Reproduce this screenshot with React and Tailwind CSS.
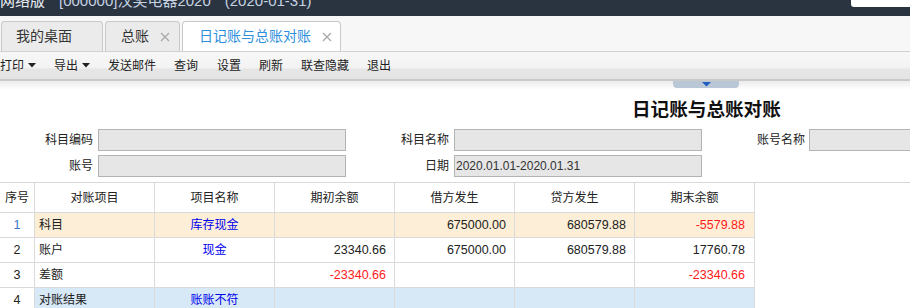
import React from "react";

const Caret = () => (
  <svg width="8" height="5" viewBox="0 0 8 5" className="ml-[4px]">
    <path d="M0 0 L8 0 L4 4.5 Z" fill="#222" />
  </svg>
);

const X = () => (
  <svg width="10" height="10" viewBox="0 0 10 10">
    <path d="M1 1 L9 9 M9 1 L1 9" stroke="#a8a8a8" strokeWidth="1.3" />
  </svg>
);

const rows = [
  { n: "1", nc: "text-[#3b78c4]", item: "科目", name: "库存现金", a: "", b: "675000.00", c: "680579.88", d: "-5579.88", dRed: true, bg: "bg-[#fdefd7]" },
  { n: "2", nc: "text-[#222]", item: "账户", name: "现金", a: "23340.66", b: "675000.00", c: "680579.88", d: "17760.78", dRed: false, bg: "bg-white" },
  { n: "3", nc: "text-[#222]", item: "差额", name: "", a: "-23340.66", aRed: true, b: "", c: "", d: "-23340.66", dRed: true, bg: "bg-white" },
  { n: "4", nc: "text-[#222]", item: "对账结果", name: "账账不符", a: "", b: "", c: "", d: "", bg: "bg-[#d7e8f6]" },
];

export default function App() {
  return (
    <div className="w-[910px] h-[308px] overflow-hidden bg-white font-['Liberation_Sans','Noto_Sans_CJK_SC',sans-serif] text-[12px] text-[#222]">
      {/* top bar */}
      <div className="relative h-[16px] bg-[#2a3441] overflow-hidden">
        <div className="flex mt-[-7px] text-[15px] leading-[15px] text-[#c5d2e0] whitespace-nowrap">
          <span className="text-[#e8edf2]">网络版</span>
          <span className="ml-[14px]">[000000]汉奖电器2020</span>
          <span className="ml-[14px]">(2020-01-31)</span>
        </div>
        <div className="absolute right-0 top-0 w-[59px] h-[7px] bg-white rounded-bl-[3px]" />
      </div>

      {/* tabs */}
      <div className="h-[36px] bg-[#f7f7f7] border-b border-[#d2d2d2] flex items-end pl-[1px] gap-[2px]">
        <div className="w-[102px] h-[30px] bg-[#ebebeb] border border-b-0 border-[#c9c9c9] rounded-t-[4px] flex items-center pl-[14px] text-[14px] text-[#333]">
          我的桌面
        </div>
        <div className="w-[75px] h-[30px] bg-[#ebebeb] border border-b-0 border-[#c9c9c9] rounded-t-[4px] flex items-center pl-[15px] text-[14px] text-[#333]">
          总账
          <span className="ml-[11px] flex"><X /></span>
        </div>
        <div className="w-[159px] h-[30px] bg-white border border-b-0 border-[#c9c9c9] rounded-t-[4px] flex items-center pl-[16px] text-[14px] text-[#2f8fdc]">
          日记账与总账对账
          <span className="ml-[11px] flex"><X /></span>
        </div>
      </div>

      {/* toolbar */}
      <div className="h-[29px] bg-[linear-gradient(#f7f7f7_0%,#f3f3f3_60%,#e6e6e6_62%,#e4e4e4_100%)] border-b-2 border-[#c9c9c9] flex items-center gap-[18px] text-[12px] text-[#222]">
        <div className="flex items-center">打印<Caret /></div>
        <div className="flex items-center">导出<Caret /></div>
        <div>发送邮件</div>
        <div>查询</div>
        <div className="ml-[1px]">设置</div>
        <div>刷新</div>
        <div>联查隐藏</div>
        <div>退出</div>
      </div>

      {/* collapse strip */}
      <div className="h-[8px] bg-[linear-gradient(#ececec,#fdfdfd)] flex">
        <div className="ml-[673px] w-[66px] h-[7px] bg-[#b9c7d7] rounded-b-[4px] flex justify-center">
          <svg width="9" height="5" viewBox="0 0 9 5" className="mt-[1px]">
            <path d="M0 0 L9 0 L4.5 4.5 Z" fill="#1f5fbf" />
          </svg>
        </div>
      </div>

      {/* title */}
      <div className="pt-[9px] pl-[632px] h-[40px]">
        <div className="text-[18.6px] leading-[24px] font-bold text-[#111] whitespace-nowrap">日记账与总账对账</div>
      </div>

      {/* form */}
      <div className="flex flex-col gap-[4px] whitespace-nowrap">
        <div className="flex items-center h-[22px]">
          <div className="w-[93px] text-right">科目编码</div>
          <div className="ml-[5px] w-[248px] h-[22px] bg-[#e6e6e6] border border-[#b3b3b3]" />
          <div className="w-[103px] text-right">科目名称</div>
          <div className="ml-[5px] w-[248px] h-[22px] bg-[#e6e6e6] border border-[#b3b3b3]" />
          <div className="w-[103px] text-right">账号名称</div>
          <div className="ml-[4px] flex-1 h-[22px] bg-[#e6e6e6] border border-[#b3b3b3] border-r-0" />
        </div>
        <div className="flex items-center h-[22px]">
          <div className="w-[93px] text-right">账号</div>
          <div className="ml-[5px] w-[248px] h-[22px] bg-[#e6e6e6] border border-[#b3b3b3]" />
          <div className="w-[103px] text-right">日期</div>
          <div className="ml-[5px] w-[248px] h-[22px] bg-[#e6e6e6] border border-[#b3b3b3] flex items-center pl-[1px] text-[12px] text-[#333]">
            2020.01.01-2020.01.31
          </div>
        </div>
      </div>

      {/* table */}
      <div className="mt-[5px] border-t border-[#d8d8d8]">
        <div className="grid grid-cols-[35px_120px_120px_120px_120px_120px_120px] w-[755px] text-[12px]">
          {["序号", "对账项目", "项目名称", "期初余额", "借方发生", "贷方发生", "期末余额"].map((h) => (
            <div key={h} className="h-[30px] border-r border-b border-[#dadada] flex items-center justify-center text-[#222]">
              {h}
            </div>
          ))}
          {rows.map((r) => (
            <React.Fragment key={r.n}>
              <div className={`h-[25px] border-r border-b border-[#dadada] bg-white flex items-center justify-center text-[12.5px] ${r.nc}`}>{r.n}</div>
              <div className={`h-[25px] border-r border-b border-[#dadada] ${r.bg} flex items-center pl-[4px]`}>{r.item}</div>
              <div className={`h-[25px] border-r border-b border-[#dadada] ${r.bg} flex items-center justify-center text-[#0000ee]`}>{r.name}</div>
              <div className={`h-[25px] border-r border-b border-[#dadada] ${r.bg} flex items-center justify-end pr-[8px] text-[12.5px] ${r.aRed ? "text-[#ff1a1a]" : "text-[#222]"}`}>{r.a}</div>
              <div className={`h-[25px] border-r border-b border-[#dadada] ${r.bg} flex items-center justify-end pr-[8px] text-[12.5px] text-[#222]`}>{r.b}</div>
              <div className={`h-[25px] border-r border-b border-[#dadada] ${r.bg} flex items-center justify-end pr-[8px] text-[12.5px] text-[#222]`}>{r.c}</div>
              <div className={`h-[25px] border-r border-b border-[#dadada] ${r.bg} flex items-center justify-end pr-[9px] text-[12.5px] ${r.dRed ? "text-[#ff1a1a]" : "text-[#222]"}`}>{r.d}</div>
            </React.Fragment>
          ))}
        </div>
      </div>
    </div>
  );
}
